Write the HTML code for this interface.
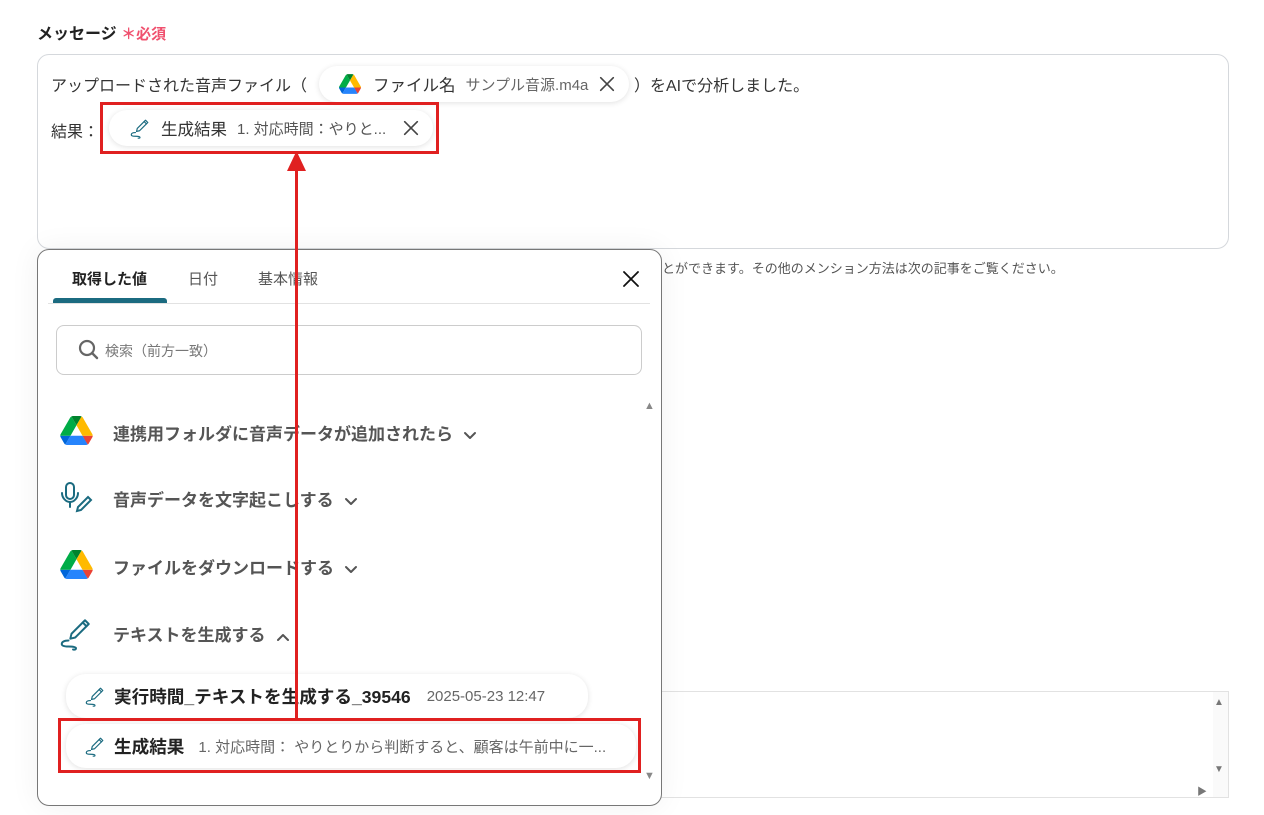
<!DOCTYPE html>
<html><head><meta charset="utf-8"><style>
*{margin:0;padding:0;box-sizing:border-box}
body{width:1264px;height:815px;background:#fff;font-family:"Liberation Sans","Noto Sans CJK JP",sans-serif;color:#333;position:relative;overflow:hidden}
.a{position:absolute;white-space:nowrap}
.chip{position:absolute;background:#fff;border-radius:20px;box-shadow:0 1px 6px rgba(0,0,0,.12);display:flex;align-items:center}
.red{position:absolute;border:3px solid #e02020}
.chev{display:inline-block;vertical-align:middle;margin-left:10px}
</style></head><body>
<svg width="0" height="0" style="position:absolute"><defs>
<symbol id="drive" viewBox="0 0 87.3 78"><path d="M6.6 66.85l3.85 6.650c.8 1.4 1.950 2.5 3.3 3.3L27.5 53H0c0 1.55.4 3.1 1.2 4.5z" fill="#0066da"/><path d="M43.65 25L29.9 1.2c-1.35.8-2.5 1.9-3.3 3.3l-25.4 44A9.06 9.06 0 000 53h27.5z" fill="#00ac47"/><path d="M73.55 76.8c1.35-.8 2.5-1.9 3.3-3.3l1.6-2.75 7.65-13.25c.8-1.4 1.2-2.95 1.2-4.5H59.8l5.85 11.5z" fill="#ea4335"/><path d="M43.65 25L57.4 1.2C56.05.4 54.5 0 52.9 0H34.4c-1.6 0-3.15.45-4.5 1.2z" fill="#00832d"/><path d="M59.8 53H27.5L13.75 76.8c1.35.8 2.9 1.2 4.5 1.2h50.8c1.6 0 3.15-.45 4.5-1.200z" fill="#2684fc"/><path d="M73.4 26.5L60.7 4.5c-.8-1.4-1.95-2.5-3.3-3.3L43.65 25 59.8 53h27.45c0-1.55-.4-3.1-1.2-4.5z" fill="#ffba00"/></symbol>
<symbol id="pen" viewBox="0 0 24 24"><g fill="none" stroke="#1b6b80" stroke-width="1.3" stroke-linecap="round" stroke-linejoin="round"><path d="M18 3.5l2.5 2.5-9 9-3.3.8.8-3.3z"/><path d="M16.5 5l2.5 2.5"/><path d="M7 17c-3 0-4.5 1-4.5 2.3S4 21 7 21s5 .3 5 1.2-1 1-2 .8"/></g></symbol>
<symbol id="x" viewBox="0 0 20 20"><path d="M3 3l14 14M17 3L3 17" stroke="currentColor" stroke-width="1.8" stroke-linecap="round"/></symbol>
<symbol id="dn" viewBox="0 0 14 10"><path d="M2 2l5 5 5-5" fill="none" stroke="#555" stroke-width="2" stroke-linecap="round" stroke-linejoin="round"/></symbol>
</defs></svg>

<div class="a" style="left:37px;top:20px;font-size:16px;font-weight:bold;color:#222">メッセージ <span style="color:#f0506e;font-size:15px">＊必須</span></div>

<div class="a" style="left:37px;top:54px;width:1192px;height:195px;border:1px solid #d5d8dc;border-radius:12px"></div>
<div class="a" style="left:51px;top:72px;font-size:16px;color:#333">アップロードされた音声ファイル（</div>
<div class="chip" style="left:319px;top:66px;width:310px;height:36px;padding-left:20px">
<svg width="22" height="20"><use href="#drive"/></svg>
<span style="font-size:16.5px;margin-left:12px;color:#333">ファイル名</span>
<span style="font-size:15px;margin-left:10px;color:#666">サンプル音源.m4a</span>
<svg style="margin-left:10px;color:#444" width="18" height="18"><use href="#x"/></svg></div>
<div class="a" style="left:634px;top:72px;font-size:16px;color:#333">）をAIで分析しました。</div>
<div class="a" style="left:51px;top:118px;font-size:16px;color:#333">結果：</div>
<div class="chip" style="left:109px;top:110px;width:324px;height:36px;padding-left:20px">
<svg width="22" height="22"><use href="#pen"/></svg>
<span style="font-size:16.5px;margin-left:10px;color:#333">生成結果</span>
<span style="font-size:15px;margin-left:10px;color:#555">1. 対応時間：やりと...</span>
<svg style="margin-left:16px;color:#444" width="18" height="18"><use href="#x"/></svg></div>
<div class="red" style="left:100px;top:102px;width:339px;height:52px"></div>

<div class="a" style="left:662px;top:258px;font-size:13px;color:#555">とができます。その他のメンション方法は次の記事をご覧ください。</div>

<div class="a" style="left:660px;top:691px;width:569px;height:107px;border:1px solid #e2e2e2;border-left:none;background:#fff"></div>
<div class="a" style="left:1213px;top:692px;width:15px;height:105px;background:#fafafa"></div>
<div class="a" style="left:1214px;top:697px;font-size:10px;color:#777">▲</div>
<div class="a" style="left:1214px;top:764px;font-size:10px;color:#777">▼</div>
<div class="a" style="left:1197px;top:783px;font-size:10px;color:#777">▶</div>

<div class="a" style="left:37px;top:249px;width:625px;height:557px;border:1px solid #777;border-radius:12px;background:#fff;box-shadow:0 0 30px rgba(0,0,0,.06)"></div>
<div class="a" style="left:72px;top:268px;font-size:15px;font-weight:bold;color:#222">取得した値</div>
<div class="a" style="left:188px;top:268px;font-size:15px;color:#555">日付</div>
<div class="a" style="left:258px;top:268px;font-size:15px;color:#555">基本情報</div>
<svg class="a" style="left:621px;top:269px;color:#111" width="20" height="20"><use href="#x"/></svg>
<div class="a" style="left:48px;top:303px;width:602px;height:1px;background:#e2e2e2"></div>
<div class="a" style="left:53px;top:298px;width:114px;height:5px;background:#1b6b80;border-radius:3px 3px 0 0"></div>
<div class="a" style="left:56px;top:325px;width:586px;height:50px;border:1px solid #ccc;border-radius:8px"></div>
<svg class="a" style="left:77px;top:338px" width="24" height="24" viewBox="0 0 24 24"><circle cx="10" cy="10" r="7" fill="none" stroke="#666" stroke-width="2.2"/><path d="M15 15l5 5" stroke="#666" stroke-width="2.4" stroke-linecap="round"/></svg>
<div class="a" style="left:105px;top:341px;font-size:14px;color:#777">検索（前方一致）</div>
<div class="a" style="left:644px;top:400px;font-size:11px;color:#888">▲</div>
<div class="a" style="left:644px;top:770px;font-size:11px;color:#888">▼</div>

<svg class="a" style="left:60px;top:416px" width="33" height="29"><use href="#drive"/></svg>
<div class="a" style="left:113px;top:420px;font-size:17px;color:#555;font-weight:bold">連携用フォルダに音声データが追加されたら<svg class="chev" width="14" height="10"><use href="#dn"/></svg></div>
<svg class="a" style="left:58px;top:481px" width="36" height="36" viewBox="0 0 36 36"><g fill="none" stroke="#1b6b80" stroke-width="2" stroke-linecap="round"><rect x="8" y="2" width="8" height="16" rx="4"/><path d="M4 12c0 5 4 9 8 9s8-4 8-9M12 21v5"/><path d="M30 16l3 3-10 10-4 1 1-4z"/></g></svg>
<div class="a" style="left:113px;top:486px;font-size:17px;color:#555;font-weight:bold">音声データを文字起こしする<svg class="chev" width="14" height="10"><use href="#dn"/></svg></div>
<svg class="a" style="left:60px;top:550px" width="33" height="29"><use href="#drive"/></svg>
<div class="a" style="left:113px;top:554px;font-size:17px;color:#555;font-weight:bold">ファイルをダウンロードする<svg class="chev" width="14" height="10"><use href="#dn"/></svg></div>
<svg class="a" style="left:58px;top:615px" width="36" height="36"><use href="#pen"/></svg>
<div class="a" style="left:113px;top:621px;font-size:17px;color:#555;font-weight:bold">テキストを生成する<svg class="chev" width="14" height="10" style="transform:rotate(180deg)"><use href="#dn"/></svg></div>

<div class="chip" style="left:66px;top:674px;width:522px;height:44px;padding-left:18px">
<svg width="22" height="22"><use href="#pen"/></svg>
<span style="font-size:17.6px;font-weight:bold;margin-left:8px;color:#222">実行時間_テキストを生成する_39546</span>
<span style="font-size:15px;margin-left:16px;color:#666">2025-05-23 12:47</span></div>
<div class="chip" style="left:66px;top:724px;width:570px;height:44px;padding-left:18px">
<svg width="22" height="22"><use href="#pen"/></svg>
<span style="font-size:17.6px;font-weight:bold;margin-left:8px;color:#222">生成結果</span>
<span style="font-size:15px;margin-left:14px;color:#666">1. 対応時間： やりとりから判断すると、顧客は午前中に一...</span></div>
<div class="red" style="left:58px;top:718px;width:583px;height:55px"></div>

<div class="a" style="left:295px;top:168px;width:3px;height:552px;background:#e02020"></div>
<svg class="a" style="left:287px;top:151px" width="19" height="20"><path d="M9.5 0L19 20H0z" fill="#e02020"/></svg>
</body></html>
